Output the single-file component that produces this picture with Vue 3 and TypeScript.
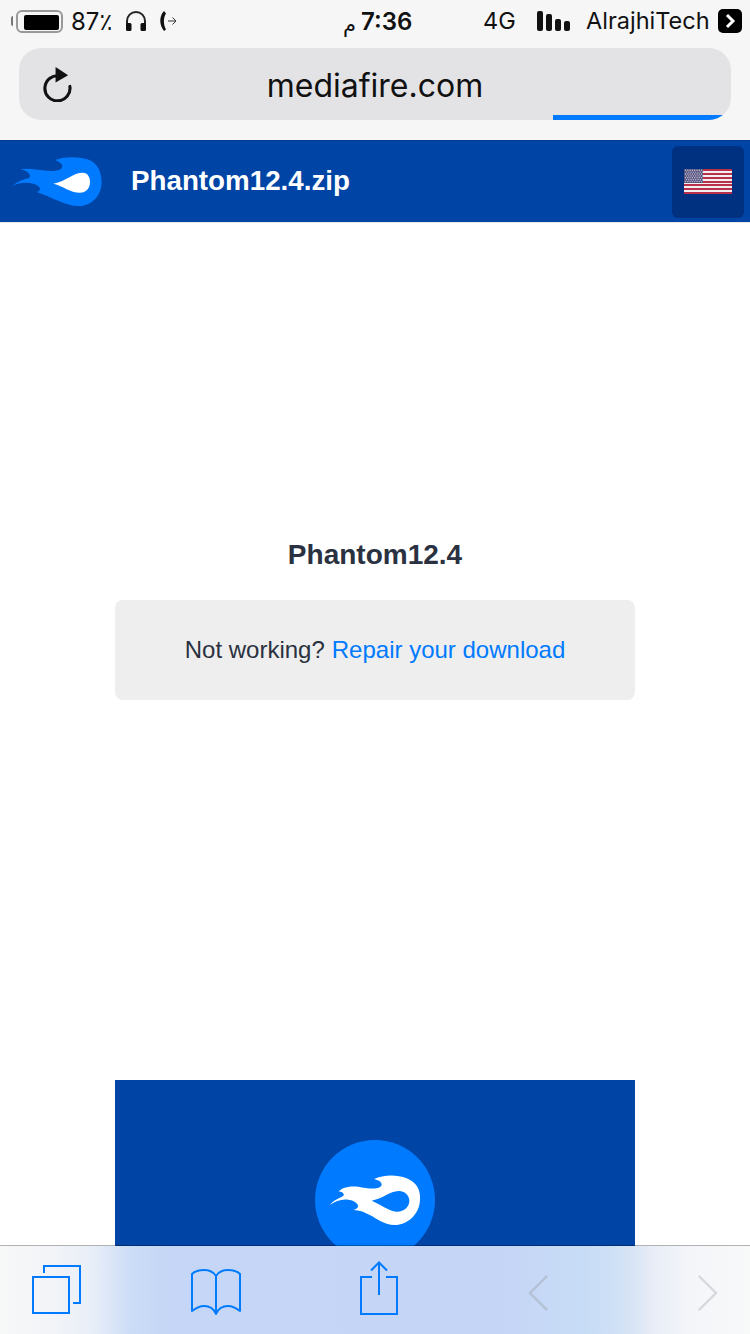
<template>
  <div class="page">
    <!-- browser chrome -->
    <div class="chrome">
      <div class="status-bar">
        <span class="battery-nub"></span>
        <span class="battery"><span class="battery-fill"></span></span>
        <span class="percent">87٪</span>
        <svg class="headphones" width="22" height="20" viewBox="0 0 22 20">
          <path d="M2 14V10a9 9 0 0 1 18 0v4" fill="none" stroke="#222" stroke-width="2" />
          <rect x="1" y="12" width="5.500" height="8" rx="1.500" fill="#111" />
          <rect x="15.500" y="12" width="5.500" height="8" rx="1.500" fill="#111" />
        </svg>
        <svg class="call" width="18" height="22" viewBox="0 0 18 22">
          <path d="M5 1C0 6 0 15 5 21l2-1.500C4.500 15 4 8 7 3.500Z" fill="#111" />
          <path d="M9 11h8M13.500 7.500 17 11l-3.500 3.500" fill="none" stroke="#333" stroke-width="1" />
        </svg>
        <span class="meridiem">م</span>
        <span class="time">7:36</span>
        <span class="network">4G</span>
        <div class="signal">
          <i v-for="bar in signalBars" :key="bar" :style="{ height: bar + 'px' }"></i>
        </div>
        <span class="carrier">AlrajhiTech</span>
        <span class="carrier-badge">
          <svg width="12" height="16" viewBox="0 0 12 16">
            <path d="M3 2l6 6-6 6" fill="none" stroke="#fff" stroke-width="3" />
          </svg>
        </span>
      </div>
      <div class="url-bar">
        <svg class="reload" width="29" height="35" viewBox="0 0 30 36">
          <path d="M17.500 9.200A13 13 0 1 0 27.800 20" fill="none" stroke="#111" stroke-width="3.200" stroke-linecap="round" />
          <path d="M13 0l13 8.500-13 7.500Z" fill="#111" />
        </svg>
        <span class="url">mediafire.com</span>
        <span></span>
        <div class="progress"></div>
      </div>
    </div>

    <!-- site header -->
    <header class="site-header">
      <svg class="site-logo" width="94" height="52" viewBox="30 60 282 156">
        <path
          d="M37 150C55 130 85 130 90 122C92 113 75 102 62 100C90 93 130 108 165 104C190 103 198 85 165 72C200 60 235 63 262 70C290 78 305 105 305 140C303 185 270 210 235 210C195 210 160 185 110 168C125 165 125 150 100 143C80 138 55 140 37 150Z"
          fill="#007aff"
        />
        <path d="M160 143C200 135 220 110 248 110C264 110 271 125 270 140C269 160 255 170 240 170C210 170 190 150 160 143Z" fill="#fff" />
      </svg>
      <span class="file-name">Phantom12.4.zip</span>
      <button class="flag-btn">
        <svg width="48" height="25" viewBox="0 0 48 25">
          <rect width="48" height="25" fill="#f3eef0" />
          <rect v-for="y in flagStripes" :key="y" x="0" :y="y" width="48" height="2" fill="#b9304a" />
          <rect width="19" height="14" fill="#54507e" />
          <circle v-for="s in flagStars" :key="s.id" :cx="s.x" :cy="s.y" r="0.7" fill="#c9c7d8" />
        </svg>
      </button>
    </header>

    <!-- download content -->
    <main class="content">
      <h1 class="title">Phantom12.4</h1>
      <div class="repair-box">
        Not working? <a class="repair-link">Repair your download</a>
      </div>
      <div class="promo">
        <div class="promo-circle">
          <svg width="120" height="120" viewBox="45 30 360 360">
            <path
              fill-rule="evenodd"
              fill="#fff"
              d="M90 225C105 205 125 205 132 195C130 187 122 184 115 185C125 175 140 167 175 170C205 176 240 180 245 165C245 155 235 150 222 147C250 134 290 133 320 145C350 157 362 180 360 210C358 255 320 285 285 285C250 285 225 260 195 248C185 243 170 241 160 240C180 235 178 222 160 213C135 203 110 210 90 225ZM215 212C240 222 265 243 290 245C312 246 328 230 328 212C328 195 312 182 295 183C270 184 250 205 215 212Z"
            />
          </svg>
        </div>
      </div>
    </main>

    <!-- safari toolbar, sits over the page -->
    <nav class="toolbar">
      <svg class="tb-tabs" width="50" height="50" viewBox="0 0 50 50">
        <path d="M12 8V1h36v37h-7" fill="none" stroke="#007aff" stroke-width="2" />
        <rect x="1" y="12" width="36" height="36" fill="none" stroke="#007aff" stroke-width="2" />
      </svg>
      <svg class="tb-book" width="50" height="48" viewBox="0 0 50 48">
        <path
          d="M25 8C22 3 17 2 13 2C8 2 4 3 1 6V43C5 40 9 38 13 38C19 38 23 41 25 46C27 41 31 38 37 38C41 38 45 40 49 43V6C46 3 42 2 37 2C33 2 28 3 25 8V44"
          fill="none"
          stroke="#007aff"
          stroke-width="2"
          stroke-linejoin="round"
        />
      </svg>
      <svg class="tb-share" width="38" height="54" viewBox="0 0 38 54">
        <path d="M12 16H1v37h36V16H26" fill="none" stroke="#007aff" stroke-width="2" />
        <path d="M19 34V2M11 9.500l8-8 8 8" fill="none" stroke="#007aff" stroke-width="2" />
      </svg>
      <svg class="tb-back" width="20" height="36" viewBox="0 0 20 36">
        <path d="M18.500 1.500 2 18l16.500 16.500" fill="none" stroke="#b4c0d4" stroke-width="2.400" stroke-linecap="round" />
      </svg>
      <svg class="tb-forward" width="20" height="36" viewBox="0 0 20 36">
        <path d="M1.500 1.500 18 18 1.500 34.500" fill="none" stroke="#d6d8dc" stroke-width="2.400" stroke-linecap="round" />
      </svg>
    </nav>
  </div>
</template>

<script setup lang="ts">
interface Star {
  id: number
  x: number
  y: number
}

const signalBars: number[] = [20, 17, 12, 10]

// alternating red stripes of the flag
const flagStripes: number[] = [0, 4, 8, 12, 15, 19, 23]

const flagStars: Star[] = []
for (let row = 0; row < 7; row++) {
  for (let col = 0; col < 8; col++) {
    flagStars.push({ id: row * 10 + col, x: 1.5 + col * 2.3 + (row % 2), y: 1.2 + row * 1.9 })
  }
}
</script>

<style>
html,
body {
  margin: 0;
  background: #fff;
}
</style>

<style scoped>
.page {
  position: relative;
  width: 750px;
  height: 1334px;
  overflow: hidden;
  background: #fff;
  font-family: 'Liberation Sans', Arial, sans-serif;
}
.chrome {
  height: 140px;
  background: #f6f6f6;
  font-family: Inter, 'DejaVu Sans', sans-serif;
  color: #111;
}
.status-bar {
  display: flex;
  align-items: center;
  height: 48px;
  padding-left: 11px;
  box-sizing: border-box;
  font-size: 24px;
  line-height: 40px;
}
.status-bar > * {
  flex: none;
}
.battery-nub {
  width: 2px;
  height: 10px;
  margin-bottom: 6px;
  background: #777;
  border-radius: 2px 0 0 2px;
}
.battery {
  width: 47px;
  height: 23px;
  margin-left: 3px;
  margin-bottom: 6px;
  padding: 3px 2px 2px 6px;
  box-sizing: border-box;
  border: 2px solid #999;
  border-radius: 6px;
}
.battery-fill {
  display: block;
  width: 35px;
  height: 15px;
  background: #000;
  border-radius: 2px;
}
.percent {
  width: 43px;
  margin-left: 8px;
  margin-bottom: 4px;
  white-space: nowrap;
}
.headphones {
  margin-left: 11px;
  margin-bottom: 6px;
}
.call {
  margin-left: 12px;
  margin-bottom: 6px;
}
.meridiem {
  width: 14px;
  margin-left: 166px;
  margin-top: 2px;
  font-family: 'DejaVu Sans', sans-serif;
  font-size: 21px;
}
.time {
  width: 54px;
  margin-left: 4px;
  margin-bottom: 4px;
  font-weight: 600;
}
.network {
  margin-left: 68px;
  width: 32px;
  margin-bottom: 6px;
  font-size: 23.500px;
}
.signal {
  display: flex;
  align-items: flex-end;
  gap: 3px;
  height: 20px;
  margin-left: 22px;
  margin-bottom: 6px;
}
.signal i {
  display: block;
  width: 6px;
  background: #111;
  border-radius: 2px;
}
.carrier {
  width: 124px;
  margin-left: 16px;
  margin-bottom: 6px;
  font-size: 23.500px;
  white-space: nowrap;
}
.carrier-badge {
  display: flex;
  align-items: center;
  justify-content: center;
  width: 24px;
  height: 24px;
  margin-left: 8px;
  margin-bottom: 6px;
  background: #000;
  border-radius: 5px;
}
.url-bar {
  position: relative;
  display: grid;
  grid-template-columns: 1fr auto 1fr;
  align-items: center;
  width: 712px;
  height: 72px;
  margin-left: 19px;
  padding: 0 24px;
  box-sizing: border-box;
  overflow: hidden;
  background: #e3e3e6;
  border-radius: 22px;
}
.reload {
  margin-top: -2px;
}
.url {
  margin-top: 2px;
  font-size: 32px;
  line-height: 72px;
  color: #111;
}
.progress {
  position: absolute;
  left: 534px;
  right: 0;
  bottom: 0;
  height: 5px;
  background: #007aff;
}
.site-header {
  display: flex;
  align-items: center;
  height: 82px;
  box-sizing: border-box;
  padding: 0 6px 0 10px;
  background: #0044a5;
  border-top: 1px solid #003c93;
  box-shadow: 0 1px 0 #e9e9e9;
}
.file-name {
  margin-left: 27px;
  margin-bottom: 2px;
  font-size: 27.750px;
  font-weight: 700;
  color: #fff;
}
.flag-btn {
  display: flex;
  align-items: center;
  justify-content: center;
  width: 72px;
  height: 72px;
  margin-left: auto;
  padding: 0;
  background: #003180;
  border: none;
  border-radius: 6px;
}
.content {
  display: flex;
  flex-direction: column;
  align-items: center;
}
.title {
  margin: 317px 0 0;
  font-size: 28px;
  line-height: 32px;
  font-weight: 700;
  color: #2a3140;
}
.repair-box {
  display: flex;
  align-items: center;
  justify-content: center;
  gap: 7px;
  width: 520px;
  height: 100px;
  margin-top: 29px;
  background: #eeeeee;
  border-radius: 8px;
  font-size: 24px;
  color: #2a3140;
}
.repair-link {
  color: #007aff;
}
.promo {
  display: flex;
  justify-content: center;
  width: 520px;
  height: 300px;
  margin-top: 380px;
  padding-top: 60px;
  box-sizing: border-box;
  background: #0044a5;
}
.promo-circle {
  width: 120px;
  height: 120px;
  background: #007aff;
  border-radius: 50%;
}
.toolbar {
  position: absolute;
  left: 0;
  right: 0;
  bottom: 0;
  display: flex;
  align-items: flex-start;
  height: 89px;
  box-sizing: border-box;
  border-top: 1px solid rgba(0, 0, 0, 0.3);
  background-clip: padding-box;
  background-image: linear-gradient(
    90deg,
    #f7f8f8 0,
    #f2f4f8 50px,
    #e9eff8 90px,
    #d8e4f7 115px,
    #cadcf6 133px,
    #c5d6f6 170px,
    #c5d5f6 500px,
    #c7dcf6 585px,
    #cfe0f6 615px,
    #d8e4f5 633px,
    #e8edf7 653px,
    #f3f5f9 687px,
    #f8f9f9 750px
  );
}
.toolbar svg {
  flex: none;
}
.tb-tabs {
  margin: 19px 0 0 32px;
}
.tb-book {
  margin: 22px 0 0 109px;
}
.tb-share {
  margin: 15px 0 0 119px;
}
.tb-back {
  margin: 29px 0 0 130px;
}
.tb-forward {
  margin: 29px 0 0 150px;
}
</style>
